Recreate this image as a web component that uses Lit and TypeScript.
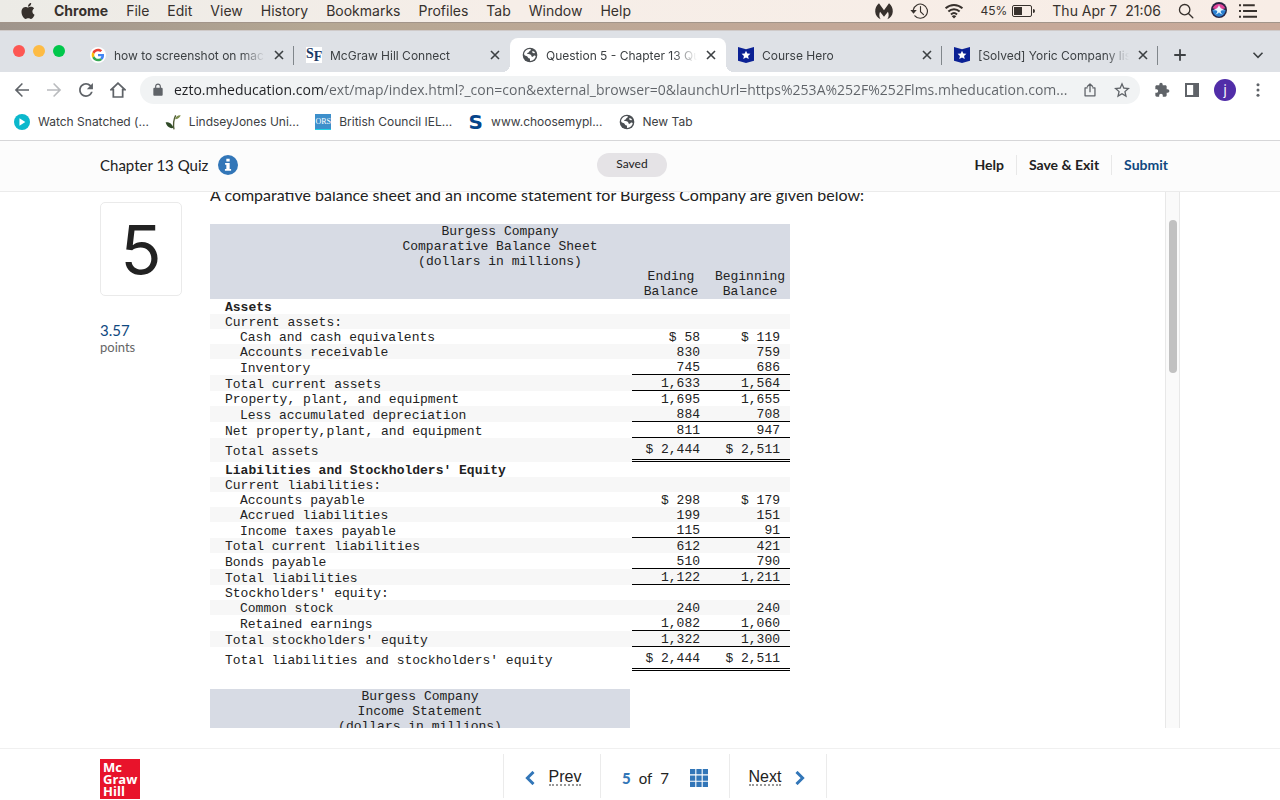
import { LitElement, html, css, svg, nothing } from "lit";
import { customElement, property } from "lit/decorators.js";
import { classMap } from "lit/directives/class-map.js";

const icons: Record<string, unknown> = {
  apple: svg`<path fill="currentColor" d="M12.152 6.896c-.948 0-2.415-1.078-3.96-1.04-2.04.027-3.91 1.183-4.961 3.014-2.117 3.675-.546 9.103 1.519 12.09 1.013 1.454 2.208 3.09 3.792 3.039 1.52-.065 2.09-.987 3.935-.987 1.831 0 2.35.987 3.96.948 1.637-.026 2.676-1.48 3.676-2.948 1.156-1.688 1.636-3.325 1.662-3.415-.039-.013-3.182-1.221-3.22-4.857-.026-3.04 2.48-4.494 2.597-4.559-1.429-2.09-3.623-2.324-4.39-2.376-2-.156-3.675 1.09-4.61 1.09zM15.53 3.83c.843-1.012 1.4-2.427 1.245-3.83-1.207.052-2.662.805-3.532 1.818-.78.896-1.454 2.338-1.273 3.714 1.338.104 2.715-.688 3.559-1.701"/>`,
  bytes: svg`<path fill="currentColor" d="M5.300 1.500C2 4 0 8.500.3 13c.3 4.500 3 8.300 7.200 10-2-3-2.300-6.500-.8-10l5.300 6.500 5.300-6.500c1.500 3.500 1.200 7-.8 10 4.200-1.700 6.900-5.500 7.200-10 .3-4.500-1.700-9-5-11.500L12 11z"/>`,
  clock: svg`<g fill="none" stroke="currentColor" stroke-width="1.500"><path d="M4.400 10.500A9.500 9.500 0 1 1 6.500 18.400M14 6v7l4 3.800" stroke-linecap="round"/><path d="M.5 10.500h8.500l-4.300 5z" fill="currentColor" stroke="none"/></g>`,
  wifi: svg`<g fill="none" stroke="currentColor" stroke-width="2.600"><path d="M.8 8.500c6.400-6 16-6 22.400 0M4.500 12.700c4.300-4.100 10.700-4.100 15 0M8 16.700c2.400-2.300 5.600-2.300 8 0"/><path d="M12 22l-3-3c1.800-1.600 4.200-1.600 6 0z" fill="currentColor" stroke="none"/></g>`,
  search: svg`<g fill="none" stroke="currentColor" stroke-width="2" stroke-linecap="round"><circle cx="10" cy="10" r="7.800"/><path d="M15.700 15.700l6.500 6.500"/></g>`,
  list: svg`<path fill="currentColor" d="M0 3h2.700v2.700H0zM5.400 3H21v2.700H5.400zM0 10.600h2.700v2.700H0zM5.400 10.600H24v2.700H5.400zM0 18.200h2.700v2.700H0zM5.400 18.200H24v2.700H5.400z"/>`,
  siri: svg`<circle cx="12" cy="12" r="12" fill="#272342"/><path d="M2.500 9.500C6 1 18 1 21.500 9.500L12 12z" fill="#e0459a"/><path d="M2 12c1 7 6 10 10 10s9-3 10-10l-10-2z" fill="#2a7fd0"/><path d="M12 4.500c1 4 4 6 9 8-4-.5-6 0-6.500 2 .5 2 2 3.500 3.500 4.500-2.500-.5-4.500-1.500-6-3.500-1.500 2-3.500 3-6 3.500 1.500-1 3-2.500 3.500-4.500-.5-2-2.500-2.500-6.500-2 5-2 8-4 9-8z" fill="#e8f8ff"/>`,
  google: svg`<circle cx="12" cy="12" r="12" fill="#fff"/><g transform="translate(2.500 2.500) scale(.395)"><path fill="#EA4335" d="M24 9.500c3.540 0 6.710 1.220 9.210 3.600l6.850-6.850C35.900 2.380 30.470 0 24 0 14.620 0 6.510 5.380 2.560 13.220l7.980 6.190C12.430 13.720 17.740 9.500 24 9.500z"/><path fill="#4285F4" d="M46.980 24.550c0-1.570-.15-3.090-.38-4.550H24v9.020h12.940c-.58 2.960-2.260 5.480-4.780 7.180l7.730 6c4.510-4.180 7.090-10.360 7.090-17.650z"/><path fill="#FBBC05" d="M10.530 28.590c-.48-1.450-.76-2.990-.76-4.590s.27-3.140.76-4.590l-7.980-6.190C.92 16.460 0 20.120 0 24c0 3.880.92 7.540 2.560 10.780l7.970-6.190z"/><path fill="#34A853" d="M24 48c6.480 0 11.930-2.130 15.890-5.810l-7.730-6c-2.150 1.450-4.920 2.300-8.160 2.300-6.260 0-11.570-4.220-13.470-9.910l-7.980 6.190C6.510 42.620 14.620 48 24 48z"/></g>`,
  globe: svg`<circle cx="12" cy="12" r="11" fill="#4b4f53"/><path fill="#fff" d="M3.200 9.500C4 6 7.500 3 12 3c1 0 1.500.8 1 1.800-.6 1.200-2.300 1.200-2.600 2.700-.2 1.300-2.700.8-2.700 2.400 0 1.400 3.600.5 5.400 1.600 1.500 1 .4 2.900 2.300 3.300 1.900.3 1.500-1.700 3.200-1.900 1-.1 1.700.3 2 .9-.6 4-4 6.900-8.300 7.100-.8-.9.200-2.200-.6-3.300-.8-1-2.600-.6-3-2.200-.4-1.500-1.700-2-3.200-2.300-1.600-.3-2.600-1.400-2.300-3.600zM15.500 6.400c1.300-.6 2.700.2 3.700 1.600.4.800-.2 1.500-1.200 1.500-1.800 0-3.800-2.300-2.500-3.100z"/>`,
  hero: svg`<path fill="#0b2194" d="M0 0l12 3.500L24 0v20.500L12 24 0 20.500z"/><path fill="#fff" d="M12 5.500l1.900 4.300 4.700.5-3.500 3.100 1 4.600-4.100-2.400L7.900 18l1-4.600-3.500-3.100 4.700-.5z"/>`,
  close: svg`<path d="M4 4l16 16M20 4L4 20" stroke="currentColor" stroke-width="3.200"/>`,
  plus: svg`<path d="M12 .5v23M.5 12h23" stroke="currentColor" stroke-width="3.600"/>`,
  chevron: svg`<path d="M3 7.500l9 9 9-9" fill="none" stroke="currentColor" stroke-width="3.200"/>`,
  back: svg`<path fill="currentColor" d="M22.500 10.700H5.800l7.600-7.600L11.800 1.400 1.200 12l10.600 10.600 1.600-1.700-7.600-7.600h16.700z"/>`,
  forward: svg`<path fill="currentColor" d="M1.500 10.700h16.700l-7.600-7.600 1.600-1.700L22.800 12 12.200 22.600l-1.600-1.700 7.600-7.600H1.500z"/>`,
  reload: svg`<path fill="currentColor" transform="translate(-3.600 -3.600) scale(1.300)" d="M17.650 6.350C16.200 4.900 14.210 4 12 4c-4.420 0-7.990 3.580-7.990 8s3.570 8 7.990 8c3.730 0 6.840-2.550 7.730-6h-2.080c-.82 2.330-3.040 4-5.650 4-3.310 0-6-2.690-6-6s2.690-6 6-6c1.660 0 3.140.69 4.220 1.780L13 11h7V4l-2.350 2.350z"/>`,
  home: svg`<path d="M12 1.800L1.800 11.500H5V22.500h14v-11h3.200z" fill="none" stroke="currentColor" stroke-width="2.600"/>`,
  lock: svg`<path fill="currentColor" d="M18 8h-1V6c0-2.760-2.240-5-5-5S7 3.240 7 6v2H6c-1.100 0-2 .9-2 2v10c0 1.100.9 2 2 2h12c1.100 0 2-.9 2-2V10c0-1.100-.9-2-2-2zm-9 0V6c0-1.660 1.340-3 3-3s3 1.340 3 3v2H9z"/>`,
  share: svg`<path d="M8 8.500H3.500v13.500h17V8.500H16M12 16V2M7 6.500L12 1.500l5 5" fill="none" stroke="currentColor" stroke-width="2.200" stroke-linejoin="round"/>`,
  star: svg`<path fill="currentColor" transform="translate(-2.400 -2) scale(1.200)" d="M22 9.240l-7.190-.62L12 2 9.190 8.630 2 9.240l5.460 4.730L5.820 21 12 17.270 18.180 21l-1.630-7.030L22 9.240zM12 15.400l-3.760 2.270 1-4.280-3.320-2.880 4.380-.38L12 6.100l1.710 4.040 4.380.38-3.320 2.880 1 4.280L12 15.400z"/>`,
  puzzle: svg`<path fill="currentColor" d="M20.500 11H19V7c0-1.100-.9-2-2-2h-4V3.500C13 2.120 11.880 1 10.500 1S8 2.120 8 3.500V5H4c-1.100 0-1.990.9-1.990 2v3.800H3.500c1.490 0 2.700 1.210 2.700 2.700s-1.210 2.700-2.700 2.700H2V20c0 1.100.9 2 2 2h3.800v-1.500c0-1.490 1.210-2.700 2.700-2.700 1.490 0 2.700 1.210 2.700 2.700V22H17c1.100 0 2-.9 2-2v-4h1.500c1.380 0 2.500-1.120 2.500-2.500S21.880 11 20.500 11z"/>`,
  panel: svg`<path fill="currentColor" fill-rule="evenodd" d="M0 0h24v24H0zM3.400 3.400v17.200H14V3.400z"/>`,
  dots: svg`<g fill="currentColor"><circle cx="12" cy="3" r="2.600"/><circle cx="12" cy="12" r="2.600"/><circle cx="12" cy="21" r="2.600"/></g>`,
  play: svg`<circle cx="12" cy="12" r="12" fill="#0bb8cc"/><path d="M8.200 6.500v11L17 12z" fill="#fff"/>`,
  plant: svg`<path d="M13.500 23C12 15 13 8 16 2" fill="none" stroke="#4e5a35" stroke-width="2"/><path d="M15 8c1-5 5-6.500 8.500-6-1 3.500-4 6-8.500 6z" fill="#7c8d4e"/><path d="M12.500 21C8 22 3 20 1 12.500c5-.5 10 2 11.500 8.500z" fill="#2f4a27"/>`,
  info: svg`<circle cx="12" cy="12" r="12" fill="#3276b8"/><path fill="#fff" d="M10 4.500h4v3.200h-4zM8.500 9.500H14v7.200h1.700V19H8.300v-2.300H10v-4.900H8.500z"/>`,
  prev: svg`<path d="M18 1.500L7.500 12 18 22.500" fill="none" stroke="currentColor" stroke-width="5"/>`,
  next: svg`<path d="M6 1.500L16.500 12 6 22.500" fill="none" stroke="currentColor" stroke-width="5"/>`,
  grid: svg`<path fill="currentColor" d="M0 0h7v7H0zM8.500 0h7v7h-7zM17 0h7v7h-7zM0 8.500h7v7H0zM8.500 8.500h7v7h-7zM17 8.500h7v7h-7zM0 17h7v7H0zM8.500 17h7v7h-7zM17 17h7v7h-7z"/>`,
};

const SIZES = [10, 12, 14, 16, 18, 20];

@customElement("ui-icon")
class UiIcon extends LitElement {
  @property() name = "";
  @property({ type: Number }) size = 16;
  static styles = css`
    :host { display: inline-flex; flex: none; }
    .s10 { width: 10px; height: 10px; }
    .s12 { width: 12px; height: 12px; }
    .s14 { width: 14px; height: 14px; }
    .s16 { width: 16px; height: 16px; }
    .s18 { width: 18px; height: 18px; }
    .s20 { width: 20px; height: 20px; }
  `;
  render() {
    const s = SIZES.includes(this.size) ? this.size : 16;
    return html`<svg class="s${s}" viewBox="0 0 24 24" aria-hidden="true">${icons[this.name]}</svg>`;
  }
}

type Row = { label: string; end?: string; begin?: string; kind?: string; rule?: string };

const sheet: Row[] = [
  { label: "Assets", kind: "bold" },
  { label: "Current assets:" },
  { label: "Cash and cash equivalents", end: "$ 58", begin: "$ 119", kind: "indent" },
  { label: "Accounts receivable", end: "830", begin: "759", kind: "indent" },
  { label: "Inventory", end: "745", begin: "686", kind: "indent", rule: "single" },
  { label: "Total current assets", end: "1,633", begin: "1,564", rule: "single" },
  { label: "Property, plant, and equipment", end: "1,695", begin: "1,655" },
  { label: "Less accumulated depreciation", end: "884", begin: "708", kind: "indent", rule: "single" },
  { label: "Net property,plant, and equipment", end: "811", begin: "947", rule: "single" },
  { label: "Total assets", end: "$ 2,444", begin: "$ 2,511", rule: "double" },
  { label: "Liabilities and Stockholders' Equity", kind: "bold" },
  { label: "Current liabilities:" },
  { label: "Accounts payable", end: "$ 298", begin: "$ 179", kind: "indent" },
  { label: "Accrued liabilities", end: "199", begin: "151", kind: "indent" },
  { label: "Income taxes payable", end: "115", begin: "91", kind: "indent", rule: "single" },
  { label: "Total current liabilities", end: "612", begin: "421" },
  { label: "Bonds payable", end: "510", begin: "790", rule: "single" },
  { label: "Total liabilities", end: "1,122", begin: "1,211", rule: "single" },
  { label: "Stockholders' equity:" },
  { label: "Common stock", end: "240", begin: "240", kind: "indent" },
  { label: "Retained earnings", end: "1,082", begin: "1,060", kind: "indent", rule: "single" },
  { label: "Total stockholders' equity", end: "1,322", begin: "1,300", rule: "single" },
  { label: "Total liabilities and stockholders' equity", end: "$ 2,444", begin: "$ 2,511", rule: "double" },
];

@customElement("mac-menubar")
class MacMenubar extends LitElement {
  static styles = css`
    :host { display: block; }
    .bar { display: flex; align-items: center; justify-content: space-between; height: 22px; padding: 0 23px 0 20px;
      background: linear-gradient(90deg, #ecebe6, #f6eee8 40%, #f8ede6); color: #37312d; border-bottom: 1px solid #a2958a;
      font: 14px/22px Inter, sans-serif; }
    nav { display: flex; align-items: center; gap: 18px; }
    button { display: flex; align-items: center; border: 0; padding: 0; background: none; color: inherit; font: inherit; white-space: nowrap; }
    .app { font-weight: 700; }
    .status { display: flex; align-items: center; gap: 17px; }
    .power { display: flex; align-items: center; gap: 5px; font-size: 12px; }
    .cell { display: flex; width: 16px; height: 8px; padding: 1px; border: 1px solid #37312d; border-radius: 2px; }
    .nub { width: 2px; height: 4px; margin-left: -4px; border-radius: 0 2px 2px 0; background: #37312d; }
    .charge { width: 45%; background: #37312d; }
    .clock { display: flex; gap: 8px; }
    .end { display: flex; gap: 12px; }
    .strip { height: 7px; background: linear-gradient(90deg, #9f958c, #b5a793 25%, #c3a898 65%, #c9aa9a); }
  `;
  render() {
    return html`
      <div class="bar">
        <nav aria-label="Menu bar">
          <button aria-label="Apple menu"><ui-icon name="apple" size="16"></ui-icon></button>
          <button class="app">Chrome</button>
          ${["File", "Edit", "View", "History", "Bookmarks", "Profiles", "Tab", "Window", "Help"].map((m) => html`<button>${m}</button>`)}
        </nav>
        <div class="status">
          <ui-icon name="bytes" size="18"></ui-icon>
          <ui-icon name="clock" size="18"></ui-icon>
          <ui-icon name="wifi" size="18"></ui-icon>
          <span class="power">45%<span class="cell"><span class="charge"></span></span><span class="nub"></span></span>
          <span class="clock"><span>Thu Apr 7</span><span>21:06</span></span>
          <ui-icon name="search" size="16"></ui-icon>
          <span class="end"><ui-icon name="siri" size="16"></ui-icon><ui-icon name="list" size="18"></ui-icon></span>
        </div>
      </div>
      <div class="strip"></div>`;
  }
}

@customElement("chrome-window")
class ChromeWindow extends LitElement {
  static styles = css`
    :host { display: block; font-family: Inter, sans-serif; color: #3c4043; }
    button { border: 0; padding: 0; background: none; color: inherit; font: inherit; display: inline-flex; align-items: center; }
    .tabs { display: flex; align-items: flex-end; height: 42px; background: #dee1e6; box-shadow: inset 0 1px #cfcac9; }
    .lights { display: flex; flex: none; gap: 8px; width: 65px; padding-left: 13px; align-self: center; }
    .light { width: 12px; height: 12px; border-radius: 50%; }
    .red { background: #fd5753; } .amber { background: #fdbb44; } .green { background: #00c74b; }
    .tab { position: relative; flex: 0 1 216px; min-width: 0; display: flex; align-items: center; height: 34px; gap: 8px;
      padding: 0 9px 0 12px; box-sizing: border-box; font-size: 12px; }
    .name { flex: 1; overflow: hidden; white-space: nowrap; color: #3c4043;
      -webkit-mask-image: linear-gradient(90deg, #000 calc(100% - 24px), transparent); }
    .divided::after { content: ""; position: absolute; right: 0; top: 8px; width: 1px; height: 19px; background: #80868b; }
    .active { background: #fff; border-radius: 8px 8px 0 0; }
    .active::before, .active::after { content: ""; position: absolute; bottom: 0; width: 8px; height: 8px; }
    .active::before { left: -8px; background: radial-gradient(circle at 0 0, transparent 8px, #fff 8px); }
    .active::after { right: -8px; background: radial-gradient(circle at 100% 0, transparent 8px, #fff 8px); }
    .new { align-self: center; margin: 8px 0 0 16px; }
    .more { align-self: center; margin: 8px 16px 0 auto; }
    .sf { display: flex; flex: none; width: 16px; height: 16px; background: #fff; color: #1d3a66; font: 700 14px/14px "Liberation Serif", serif; }
    .sub { line-height: 20px; }
    .bar { display: flex; align-items: center; height: 36px; padding: 0 15px 0 14px; background: #fff; color: #5f6368; }
    .nav { display: flex; gap: 16px; flex: none; align-items: center; }
    .off { color: #b9bbbe; }
    .omni { display: flex; flex: 1; min-width: 0; align-items: center; height: 28px; margin: 0 14px; padding: 0 10px 0 11px;
      border-radius: 14px; background: #f1f3f4; gap: 9px; box-sizing: border-box; }
    .url { flex: 1; min-width: 0; border: 0; padding: 0; outline: 0; font: 14px/20px "Open Sans", sans-serif;
      background: linear-gradient(90deg, #202124 149px, #5f6368 149px) text; -webkit-background-clip: text; color: transparent; text-overflow: ellipsis; }
    .acts { display: flex; gap: 17px; }
    .tools { display: flex; align-items: center; gap: 15px; }
    .me { justify-content: center; width: 22px; height: 22px; border-radius: 50%; background: #512da8; color: #fff; font-size: 13px; line-height: 20px; }
    .marks { display: flex; align-items: center; gap: 16px; height: 33px; padding: 0 14px 5px; background: #fff; border-bottom: 1px solid #d6d6d8; box-sizing: border-box; }
    .marks a { display: flex; align-items: center; gap: 8px; color: #3c4043; text-decoration: none; font-size: 12px; line-height: 16px; white-space: nowrap; }
    .ors { display: flex; justify-content: center; width: 16px; height: 15px; background: #3d8fcb; color: #fff; border-bottom: 1px solid #1fd3e8; font: 8px/15px "Liberation Serif", serif; }
    .s { width: 15px; color: #05448a; font: 700 20px/16px "DejaVu Sans", sans-serif; text-align: center; }
  `;
  tab(icon: unknown, title: string, mode: string) {
    return html`<div class=${classMap({ tab: true, active: mode === "active", divided: mode === "divided" })} role="tab" aria-selected=${mode === "active"}>
      ${icon}<span class="name">${title}</span>
      <button aria-label="Close tab"><ui-icon name="close" size="12"></ui-icon></button>
    </div>`;
  }
  render() {
    const ic = (n: string, s = 16) => html`<ui-icon name=${n} size=${s}></ui-icon>`;
    return html`
      <div class="tabs" role="tablist">
        <div class="lights"><span class="light red"></span><span class="light amber"></span><span class="light green"></span></div>
        ${this.tab(ic("google"), "how to screenshot on mac", "divided")}
        ${this.tab(html`<span class="sf">S<span class="sub">F</span></span>`, "McGraw Hill Connect", "")}
        ${this.tab(ic("globe"), "Question 5 - Chapter 13 Quiz", "active")}
        ${this.tab(ic("hero"), "Course Hero", "divided")}
        ${this.tab(ic("hero"), "[Solved] Yoric Company lists", "divided")}
        <button class="new" aria-label="New tab">${ic("plus", 12)}</button>
        <button class="more" aria-label="Search tabs">${ic("chevron", 12)}</button>
      </div>
      <div class="bar">
        <div class="nav">
          <button aria-label="Back">${ic("back")}</button>
          <button aria-label="Forward" class="off">${ic("forward")}</button>
          <button aria-label="Reload">${ic("reload")}</button>
          <button aria-label="Home">${ic("home")}</button>
        </div>
        <div class="omni">
          ${ic("lock", 14)}
          <input class="url" aria-label="Address" value="ezto.mheducation.com/ext/map/index.html?_con=con&external_browser=0&launchUrl=https%253A%252F%252Flms.mheducation.com..." />
          <div class="acts">
            <button aria-label="Share">${ic("share", 14)}</button>
            <button aria-label="Bookmark this page">${ic("star")}</button>
          </div>
        </div>
        <div class="tools">
          <button aria-label="Extensions">${ic("puzzle")}</button>
          <button aria-label="Side panel">${ic("panel", 14)}</button>
          <button class="me" aria-label="Profile">j</button>
          <button aria-label="Menu">${ic("dots", 14)}</button>
        </div>
      </div>
      <nav class="marks" aria-label="Bookmarks">
        <a href="#">${ic("play")}Watch Snatched (...</a>
        <a href="#">${ic("plant")}LindseyJones Uni...</a>
        <a href="#"><span class="ors">ORS</span>British Council IEL...</a>
        <a href="#"><span class="s">S</span>www.choosemypl...</a>
        <a href="#">${ic("globe")}New Tab</a>
      </nav>`;
  }
}

@customElement("quiz-page")
class QuizPage extends LitElement {
  static styles = css`
    :host { display: flex; flex-direction: column; min-height: 0; background: #fff; color: #222; font: 15px/20px Lato, sans-serif; }
    button { border: 0; padding: 0; background: none; color: inherit; font: inherit; }
    header { flex: none; display: grid; grid-template-columns: 1fr auto 1fr; align-items: center; height: 48px; padding: 0 112px 2px 96px;
      background: #fcfcfc; border-bottom: 1px solid #ebebeb; }
    .title { display: flex; align-items: center; gap: 10px; margin: 0 0 0 4px; font-size: 15px; font-weight: 400; }
    .saved { width: 70px; height: 24px; border-radius: 12px; background: #e5e3e6; text-align: center; font-size: 12px; line-height: 22px; }
    .actions { display: flex; justify-content: flex-end; font-size: 14px; font-weight: 700; }
    .actions button { padding: 0 12px; border-left: 1px solid #e8e8e8; }
    .actions button:first-child { border-left: 0; }
    .actions button:last-child { padding-right: 0; color: #0f4880; }
    .scroller { flex: 1; min-height: 0; display: flex; margin: 0 100px 20px; overflow: hidden; }
    aside { flex: none; width: 82px; padding-top: 10px; }
    .number { height: 92px; border: 1px solid #eaeaea; border-radius: 5px; text-align: center; font: 68px/92px Inter, sans-serif; }
    .points { margin: 24px 0 0; color: #0f4880; }
    .unit { margin: 0; color: #666; font-size: 13px; line-height: 14px; }
    article { flex: 1; margin: -7px 28px 0; min-width: 0; }
    p { margin: 0; }
    .intro { margin-bottom: 19px; font-size: 16px; }
    table { border-spacing: 0; font: 13px/15px "Liberation Mono", monospace; margin-bottom: 18px; }
    .sheet { width: 580px; }
    .income { width: 420px; }
    th, td { padding: 0; }
    thead th { background: #d7dbe4; font-weight: 400; }
    .c1 { width: 422px; } .c2 { width: 78px; } .c3 { width: 80px; }
    tbody tr:nth-child(even) { background: #f7f7f7; }
    tbody th, tbody td { line-height: 13px; padding-top: 2px; height: 13px; }
    .label { padding-left: 15px; text-align: left; font-weight: 400; }
    .indent { padding-left: 30px; }
    .bold { font-weight: 700; }
    .num { padding-right: 10px; text-align: right; vertical-align: top; }
    .single { border-bottom: 1px solid #000; }
    tbody .double { padding-top: 5px; padding-bottom: 3px; border-bottom: 3px double #000; }
    .track { flex: none; width: 13px; border: solid #e8e8e8; border-width: 0 1px; background: #fafafa; }
    .thumb { width: 8px; height: 153px; margin: 28px auto 0; border-radius: 4px; background: #c1c1c1; }
    footer { flex: none; display: flex; align-items: center; height: 51px; padding: 0 90px 0 100px; border-top: 1px solid #f0f0f0; }
    .logo { width: 37px; height: 38px; margin-top: 9px; padding: 2px 0 0 3px; background: #e8132b; color: #fff; font: 700 13px/12px "Open Sans", sans-serif; }
    .pager { flex: 1; display: flex; justify-content: center; padding-top: 2px; font: 16px/20px "Liberation Sans", sans-serif; }
    .pager > * { display: flex; align-items: center; justify-content: center; height: 44px; padding: 4px 0 0; box-sizing: border-box; border-left: 1px solid #ebebeb; }
    .pager .step { width: 97px; gap: 12px; }
    .pager .step:last-child { width: 98px; border-right: 1px solid #ebebeb; }
    .step ui-icon { color: #3276b8; }
    .word { border-bottom: 2px dotted #999; line-height: 15px; }
    .pager .pos { width: 129px; gap: 8px; font: 15px/20px Lato, sans-serif; }
    .now { color: #3276b8; font-weight: 900; }
    .all { display: flex; margin-left: 13px; color: #3276b8; }
  `;
  row(r: Row) {
    const num = (v?: string) => html`<td class="num ${r.rule ?? ""}">${v ?? nothing}</td>`;
    return html`<tr><th scope="row" class="label ${r.kind ?? ""}">${r.label}</th>${num(r.end)}${num(r.begin)}</tr>`;
  }
  render() {
    return html`
      <header>
        <h1 class="title">Chapter 13 Quiz <ui-icon name="info" size="20"></ui-icon></h1>
        <div class="saved" role="status">Saved</div>
        <div class="actions"><button>Help</button><button>Save &amp; Exit</button><button>Submit</button></div>
      </header>
      <main class="scroller">
        <aside>
          <div class="number">5</div>
          <p class="points">3.57</p>
          <p class="unit">points</p>
        </aside>
        <article>
          <p class="intro">A comparative balance sheet and an income statement for Burgess Company are given below:</p>
          <table class="sheet">
            <thead>
              <tr><th colspan="3">Burgess Company<br />Comparative Balance Sheet<br />(dollars in millions)</th></tr>
              <tr><th class="c1"></th><th class="c2" scope="col">Ending<br />Balance</th><th class="c3" scope="col">Beginning<br />Balance</th></tr>
            </thead>
            <tbody>${sheet.map((r) => this.row(r))}</tbody>
          </table>
          <table class="income">
            <thead><tr><th>Burgess Company<br />Income Statement<br />(dollars in millions)</th></tr></thead>
          </table>
        </article>
        <div class="track"><div class="thumb"></div></div>
      </main>
      <footer>
        <div class="logo">Mc<br />Graw<br />Hill</div>
        <nav class="pager" aria-label="Questions">
          <button class="step"><ui-icon name="prev" size="14"></ui-icon><span class="word">Prev</span></button>
          <div class="pos"><span class="now">5</span><span>of</span><span>7</span>
            <button class="all" aria-label="All questions"><ui-icon name="grid" size="18"></ui-icon></button></div>
          <button class="step"><span class="word">Next</span><ui-icon name="next" size="14"></ui-icon></button>
        </nav>
      </footer>`;
  }
}

@customElement("app-root")
class AppRoot extends LitElement {
  static styles = css`
    :host { display: flex; flex-direction: column; height: 100vh; overflow: hidden; }
    mac-menubar, chrome-window { flex: none; }
    quiz-page { flex: 1; }
  `;
  render() {
    return html`<mac-menubar></mac-menubar><chrome-window></chrome-window><quiz-page></quiz-page>`;
  }
}
